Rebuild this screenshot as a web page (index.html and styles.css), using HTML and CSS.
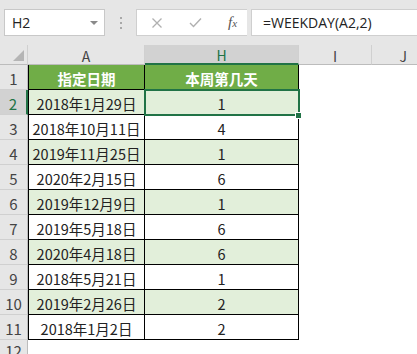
FILE: index.html
```html
<!DOCTYPE html>
<html lang="zh-CN">
<head>
    <meta charset="UTF-8">
    <title>WEEKDAY</title>
    <link rel="stylesheet" href="styles.css">
</head>
<body>
    <div class="formula-bar">
        <div class="name-box">
            <span>H2</span>
            <span class="caret"></span>
        </div>
        <div class="dots"><i></i><i></i><i></i></div>
        <div class="buttons">
            <svg class="btn" width="12" height="12" viewBox="0 0 12 12"><path d="M1.5 1.5l9 9M10.5 1.5l-9 9" stroke="#b0b0b0" stroke-width="1.3" fill="none"/></svg>
            <svg class="btn" width="13" height="11" viewBox="0 0 13 11"><path d="M1 6l3.5 3.5L12 1.5" stroke="#b0b0b0" stroke-width="1.4" fill="none"/></svg>
            <span class="fx"><i>f</i><i class="x">x</i></span>
        </div>
        <div class="formula">=WEEKDAY(A2,2)</div>
    </div>

    <div class="sheet">
        <div class="hd corner"><span class="tri"></span></div>
        <div class="hd col">A</div>
        <div class="hd col sel">H</div>
        <div class="hd col">I</div>
        <div class="hd col j">J</div>

        <div class="rh">1</div>
        <div class="c a title">指定日期</div>
        <div class="c h title">本周第几天</div>
        <div></div><div></div>

        <div class="rh sel">2</div>
        <div class="c a alt">2018年1月29日</div>
        <div class="c h alt active">1</div>
        <div></div><div></div>

        <div class="rh">3</div>
        <div class="c a">2018年10月11日</div>
        <div class="c h">4</div>
        <div></div><div></div>

        <div class="rh">4</div>
        <div class="c a alt">2019年11月25日</div>
        <div class="c h alt">1</div>
        <div></div><div></div>

        <div class="rh">5</div>
        <div class="c a">2020年2月15日</div>
        <div class="c h">6</div>
        <div></div><div></div>

        <div class="rh">6</div>
        <div class="c a alt">2019年12月9日</div>
        <div class="c h alt">1</div>
        <div></div><div></div>

        <div class="rh">7</div>
        <div class="c a">2019年5月18日</div>
        <div class="c h">6</div>
        <div></div><div></div>

        <div class="rh">8</div>
        <div class="c a alt">2020年4月18日</div>
        <div class="c h alt">6</div>
        <div></div><div></div>

        <div class="rh">9</div>
        <div class="c a">2018年5月21日</div>
        <div class="c h">1</div>
        <div></div><div></div>

        <div class="rh">10</div>
        <div class="c a alt">2019年2月26日</div>
        <div class="c h alt">2</div>
        <div></div><div></div>

        <div class="rh">11</div>
        <div class="c a">2018年1月2日</div>
        <div class="c h">2</div>
        <div></div><div></div>

        <div class="rh last">12</div>
        <div></div><div></div><div></div><div></div>
    </div>
</body>
</html>
```

FILE: styles.css
```css
body {
    margin: 0;
    width: 417px;
    height: 354px;
    overflow: hidden;
    background: #fff;
    font-family: "Noto Sans CJK SC", "Noto Sans", sans-serif;
    color: #222;
}
.formula-bar {
    height: 45px;
    box-sizing: border-box;
    padding: 9px 0 0 4px;
    background: #e6e6e6;
    display: flex;
    align-items: flex-start;
}
.name-box {
    width: 101px;
    height: 27px;
    box-sizing: border-box;
    background: #fff;
    border: 1px solid #c8c8c8;
    display: flex;
    align-items: center;
    justify-content: space-between;
    padding: 0 6px 0 7px;
    font-family: "Open Sans", "Noto Sans", sans-serif;
    font-size: 14px;
}
.caret {
    width: 0;
    height: 0;
    border-left: 4px solid transparent;
    border-right: 4px solid transparent;
    border-top: 4px solid #8a8a8a;
}
.dots {
    width: 31px;
    height: 27px;
    display: flex;
    flex-direction: column;
    align-items: center;
    justify-content: center;
    gap: 3px;
}
.dots i {
    width: 2px;
    height: 2px;
    background: #a8a8a8;
}
.buttons {
    width: 111px;
    height: 27px;
    box-sizing: border-box;
    background: #fff;
    border: 1px solid #cfcfcf;
    border-right: none;
    display: flex;
    align-items: center;
    padding-left: 14px;
}
.buttons .btn {
    margin-right: 26px;
}
.buttons svg + svg {
    margin-right: 22px;
}
.fx {
    font-family: "Liberation Serif", serif;
    font-size: 15px;
    color: #555;
}
.fx .x {
    font-size: 11px;
}
.formula {
    flex: 1;
    height: 27px;
    box-sizing: border-box;
    margin-left: 4px;
    background: #fff;
    border: 1px solid #cfcfcf;
    border-right: none;
    padding: 3px 0 0 11px;
    font-family: "Open Sans", "Noto Sans", sans-serif;
    font-size: 14px;
    color: #222;
}

.sheet {
    display: grid;
    grid-template-columns: 28px 117px 154px 73px 1fr;
    grid-template-rows: 20px repeat(12, 25px);
    overflow: hidden;
}
.sheet > div {
    box-sizing: border-box;
}
.hd {
    background: #e6e6e6;
    border-bottom: 1px solid #bcbcbc;
    border-right: 1px solid #d0d0d0;
    display: flex;
    align-items: center;
    justify-content: center;
    font-size: 14px;
    color: #444;
    padding-top: 2px;
}
.hd.j {
    border-right: none;
    justify-content: flex-end;
    padding-right: 10px;
}
.hd.sel {
    background: #d2d2d2;
    color: #217346;
    border-bottom: 2px solid #217346;
}
.corner {
    position: relative;
}
.tri {
    position: absolute;
    right: 3px;
    bottom: 3px;
    width: 0;
    height: 0;
    border-left: 11px solid transparent;
    border-bottom: 11px solid #b5b5b5;
}
.rh {
    background: #e6e6e6;
    border-right: 1px solid #bcbcbc;
    border-bottom: 1px solid #d0d0d0;
    display: flex;
    align-items: center;
    justify-content: center;
    font-size: 15px;
    color: #444;
    padding-top: 3px;
}
.rh.last {
    align-items: flex-start;
    padding-top: 0;
}
.rh.sel {
    background: #d2d2d2;
    color: #217346;
    border-right: 2px solid #217346;
}
.c {
    border-right: 1px solid #000;
    border-bottom: 1px solid #000;
    display: flex;
    align-items: center;
    justify-content: center;
    font-size: 14.5px;
    padding-top: 2px;
}
.c.a {
    border-left: 1px solid #000;
}
.title {
    background: #70ad47;
    color: #fff;
    font-weight: bold;
}
.alt {
    background: #e2efda;
}
.active {
    position: relative;
}
.active::after {
    content: "";
    position: absolute;
    top: -1px;
    left: -1px;
    right: -2px;
    bottom: -2px;
    border: 2px solid #217346;
}
.active::before {
    content: "";
    position: absolute;
    right: -4px;
    bottom: -5px;
    width: 5px;
    height: 5px;
    background: #217346;
    border: 1px solid #fff;
    z-index: 2;
}
```
